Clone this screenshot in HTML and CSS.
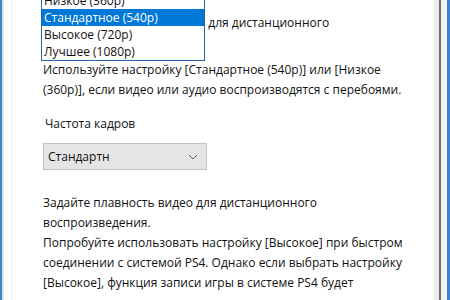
FILE: index.html
```html
<!DOCTYPE html>
<html lang="ru">
<head>
    <meta charset="UTF-8">
    <title>Настройки видео</title>
    <link rel="stylesheet" href="styles.css">
</head>
<body>
    <div class="window">
        <div class="frame-left"></div>

        <div class="content">
            <p class="hint">
                Задайте разрешение видео для дистанционного<br>
                воспроизведения.
            </p>
            <p class="hint">
                Используйте настройку [Стандартное (540p)] или [Низкое<br>
                (360p)], если видео или аудио воспроизводятся с перебоями.
            </p>

            <div class="label">Частота кадров</div>
            <div class="select">
                <span>Стандартн</span>
                <svg class="chevron" width="10" height="6" viewBox="0 0 10 6">
                    <polyline points="1,1 5,5 9,1" fill="none" stroke="#606060" stroke-width="1"/>
                </svg>
            </div>

            <p class="hint lower">
                Задайте плавность видео для дистанционного<br>
                воспроизведения.<br>
                Попробуйте использовать настройку [Высокое] при быстром<br>
                соединении с системой PS4. Однако если выбрать настройку<br>
                [Высокое], функция записи игры в системе PS4 будет<br>
                отключена.
            </p>

            <!-- open resolution list, drawn over the text -->
            <ul class="dropdown">
                <li>Низкое (360p)</li>
                <li class="selected">Стандартное (540p)</li>
                <li>Высокое (720p)</li>
                <li>Лучшее (1080p)</li>
            </ul>
        </div>

        <div class="rail"></div>
        <div class="frame-right"></div>
    </div>
</body>
</html>
```

FILE: styles.css
```css
body {
    margin: 0;
    background-color: #fff;
    font-family: "Open Sans", "Noto Sans", sans-serif;
    font-size: 12px;
    color: #111;
}
.window {
    display: flex;
    height: 300px;
    overflow: hidden;
}
.frame-left {
    width: 9px;
    border-left: 2px solid #3a84d4;
    border-right: 1px solid #ececec;
    background: linear-gradient(to right, #e4e4e4 2px, #fff 2px);
}
.content {
    flex: 1;
    position: relative;
    padding: 13px 0 0 31px;
    white-space: nowrap;
}
.hint {
    margin: 0 0 7px;
    line-height: 20px;
}
.hint.lower {
    margin-top: 23px;
}
.label {
    margin: 14px 0 0 2px;
    line-height: 20px;
}
.select {
    display: flex;
    align-items: center;
    justify-content: space-between;
    width: 150px;
    height: 25px;
    margin-top: 9px;
    padding: 0 8px 0 4px;
    background-color: #e5e5e5;
    border: 1px solid #c2c2c2;
}
.chevron {
    display: block;
}
.dropdown {
    position: absolute;
    left: 29px;
    top: -9px;
    width: 162px;
    margin: 0;
    padding: 0;
    list-style: none;
    background-color: #fff;
    border: 1px solid #2a64a8;
}
.dropdown li {
    height: 17px;
    line-height: 17px;
    padding-left: 2px;
}
.dropdown li.selected {
    background-color: #0078d7;
    color: #fff;
}
.rail {
    width: 5px;
    background-color: #ededed;
    border-right: 2px solid #707070;
}
.frame-right {
    width: 6px;
    background-color: #f2f2f2;
    border-right: 3px solid #3a84d4;
}
```
